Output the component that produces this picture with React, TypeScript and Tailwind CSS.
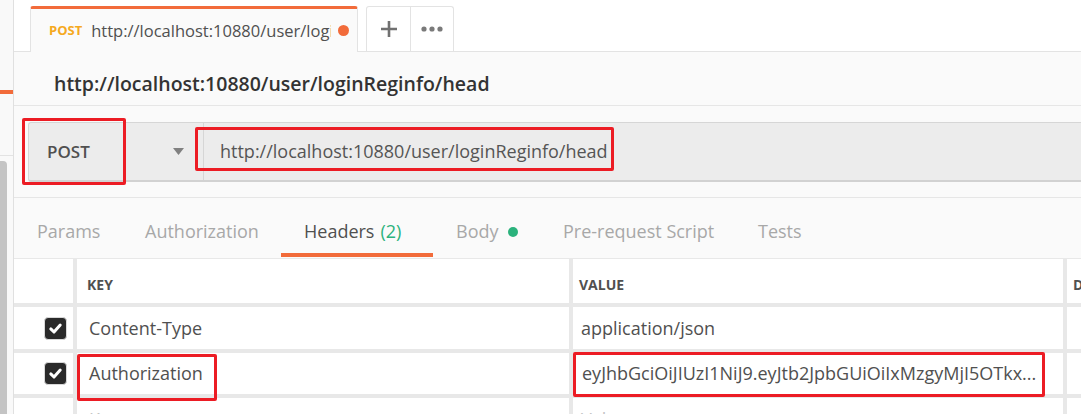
import React from "react";

function Check() {
  return (
    <div className="w-[23px] h-[23px] rounded-[4px] bg-[#2a2a2a] border border-[#d9d9d9] flex items-center justify-center">
      <svg width="15" height="15" viewBox="0 0 14 14">
        <path d="M2.6 7.4 L5.6 10.3 L11.4 3.8" stroke="white" strokeWidth="2.8" fill="none" strokeLinecap="round" strokeLinejoin="round" />
      </svg>
    </div>
  );
}

export default function App() {
  const tabs = [
    { label: "Params", w: "w-[108px]" },
    { label: "Authorization", w: "w-[159px]" },
    { label: "Headers", active: true, count: "(2)", w: "w-[152px]" },
    { label: "Body", dot: true, w: "w-[107px]" },
    { label: "Pre-request Script", w: "w-[195px]" },
    { label: "Tests", w: "w-[100px]" },
  ];
  return (
    <div className="w-[1081px] h-[414px] overflow-hidden flex bg-[#fafafa] font-['Open_Sans','Noto_Sans',sans-serif] text-[#505050]">
      {/* sidebar */}
      <div className="w-[14px] shrink-0 border-r border-[#e0e0e0] flex flex-col bg-[#f9f9f9]">
        <div className="h-[156px] shrink-0 border-b border-[#e3e3e3] pt-[90px]">
          <div className="h-[4px] bg-[#f26b3a]" />
        </div>
        <div className="flex-1 pt-[5px] pr-[6px]">
          <div className="h-full bg-[#c4c4c4] rounded-tr-[4px]" />
        </div>
      </div>

      {/* main */}
      <div className="flex-1 flex flex-col min-w-0">
        {/* tab bar */}
        <div className="h-[52px] shrink-0 bg-white border-b border-[#e3e3e3] flex items-end pl-[16px]">
          <div className="h-[46px] w-[328px] -mb-px bg-[#fafafa] border-x border-[#e3e3e3] border-t-[3px] border-t-[#f26b3a] rounded-t-[3px] flex items-center pl-[18px] pr-[8px]">
            <span className="text-[13px] font-bold text-[#f5a91f] mr-[9px] leading-none">POST</span>
            <span className="flex-1 min-w-0 text-[16.5px] leading-[22px] text-[#505050] whitespace-nowrap overflow-hidden">
              http://localhost:10880/user/loginReginfo/head
            </span>
            <span className="w-[11px] h-[11px] rounded-full bg-[#f26b3a] ml-[7px] shrink-0" />
          </div>
          <div className="ml-[8px] h-[45px] flex border-x border-t border-[#e3e3e3] rounded-t-[3px] bg-white">
            <div className="w-[44px] flex items-center justify-center border-r border-[#e3e3e3]">
              <svg width="18" height="18" viewBox="0 0 18 18">
                <path d="M9 1 V17 M1 9 H17" stroke="#707070" strokeWidth="2.6" />
              </svg>
            </div>
            <div className="w-[42px] flex items-center justify-center">
              <svg width="22" height="6" viewBox="0 0 22 6">
                <circle cx="3" cy="3" r="2.6" fill="#7a7a7a" />
                <circle cx="11" cy="3" r="2.6" fill="#7a7a7a" />
                <circle cx="19" cy="3" r="2.6" fill="#7a7a7a" />
              </svg>
            </div>
          </div>
        </div>

        {/* title */}
        <div className="h-[54px] shrink-0 border-b border-[#e6e6e6] pl-[40px] pt-[19px]">
          <div className="text-[19.5px] font-semibold leading-[26px] text-[#333333] whitespace-nowrap">
            http://localhost:10880/user/loginReginfo/head
          </div>
        </div>

        {/* url row */}
        <div className="h-[92px] shrink-0 border-b border-[#e6e6e6] pt-[16px] pl-[14px]">
          <div className="relative h-[60px] flex bg-[#ececec] border-t border-l border-[#d6d6d6] border-b-2 border-b-[#d2d2d2] rounded-l-[3px]">
            <div className="w-[175px] shrink-0 border-r border-[#d6d6d6] flex items-center justify-between pl-[18px] pr-[19px]">
              <span className="text-[17px] font-semibold text-[#505050]">POST</span>
              <svg width="11" height="7" viewBox="0 0 11 7">
                <path d="M0 0 H11 L5.5 7 Z" fill="#808080" />
              </svg>
            </div>
            <div className="flex-1 flex items-center pl-[16px] text-[18px] text-[#555555] whitespace-nowrap">
              http://localhost:10880/user/loginReginfo/head
            </div>
            <div className="absolute left-[-7px] top-[-5px] w-[104px] h-[67px] border-[3px] border-[#ec1c24] rounded-[2px]" />
            <div className="absolute left-[166px] top-[4px] w-[419px] h-[44px] border-[3px] border-[#ec1c24] rounded-[2px]" />
          </div>
        </div>

        {/* request tabs */}
        <div className="h-[60px] shrink-0 flex">
          {tabs.map((t) => (
            <div key={t.label} className={`relative ${t.w} shrink-0 pl-[23px] pt-[21px] text-[18px] leading-[24px] whitespace-nowrap flex items-start`}>
              <span className={t.active ? "text-[#505050]" : "text-[#a8a8a8]"}>{t.label}</span>
              {t.count && <span className="ml-[6px] text-[#2bb27c]">{t.count}</span>}
              {t.dot && <span className="ml-[9px] mt-[8px] w-[10px] h-[10px] rounded-full bg-[#2bb27c]" />}
              {t.active && <div className="absolute left-0 right-0 bottom-[1px] h-[4px] bg-[#f26b3a]" />}
            </div>
          ))}
        </div>

        {/* table */}
        <div className="flex-1 border-t border-[#e8e8e8] bg-[#e8e8e8] grid grid-cols-[59px_492px_490px_1fr] grid-rows-[44px_42px_41px_42px] gap-[4px]">
          {/* header */}
          <div className="bg-white" />
          <div className="bg-white flex items-center pl-[10px] pt-[6px] text-[14px] font-bold text-[#505050]">KEY</div>
          <div className="bg-white flex items-center pl-[6px] pt-[6px] text-[14px] font-bold text-[#505050]">VALUE</div>
          <div className="bg-white flex items-center pl-[6px] pt-[6px] text-[14px] font-bold text-[#505050] overflow-hidden whitespace-nowrap">DESCRIPTION</div>

          {/* row 1 */}
          <div className="bg-white flex items-center pl-[30px]"><Check /></div>
          <div className="bg-white flex items-center pl-[12px] text-[18px]">Content-Type</div>
          <div className="bg-white flex items-center pl-[8px] text-[18px]">application/json</div>
          <div className="bg-white" />

          {/* row 2 */}
          <div className="bg-white flex items-center pl-[30px]"><Check /></div>
          <div className="relative bg-white flex items-center pl-[12px] text-[18px]">
            Authorization
            <div className="absolute left-0 top-[1px] w-[140px] h-[47px] border-[3px] border-[#ec1c24] rounded-[2px]" />
          </div>
          <div className="relative bg-white flex items-center pl-[9px] text-[18px] whitespace-nowrap">
            eyJhbGciOiJIUzI1NiJ9.eyJtb2JpbGUiOiIxMzgyMjI5OTkx...
            <div className="absolute left-0 top-[-1px] w-[472px] h-[45px] border-[3px] border-[#ec1c24] rounded-[2px]" />
          </div>
          <div className="bg-white" />

          {/* row 3 */}
          <div className="bg-white" />
          <div className="bg-white flex items-center pl-[12px] text-[18px] text-[#c4c4c4]">Key</div>
          <div className="bg-white flex items-center pl-[8px] text-[18px] text-[#c4c4c4]">Value</div>
          <div className="bg-white" />
        </div>
      </div>
    </div>
  );
}
